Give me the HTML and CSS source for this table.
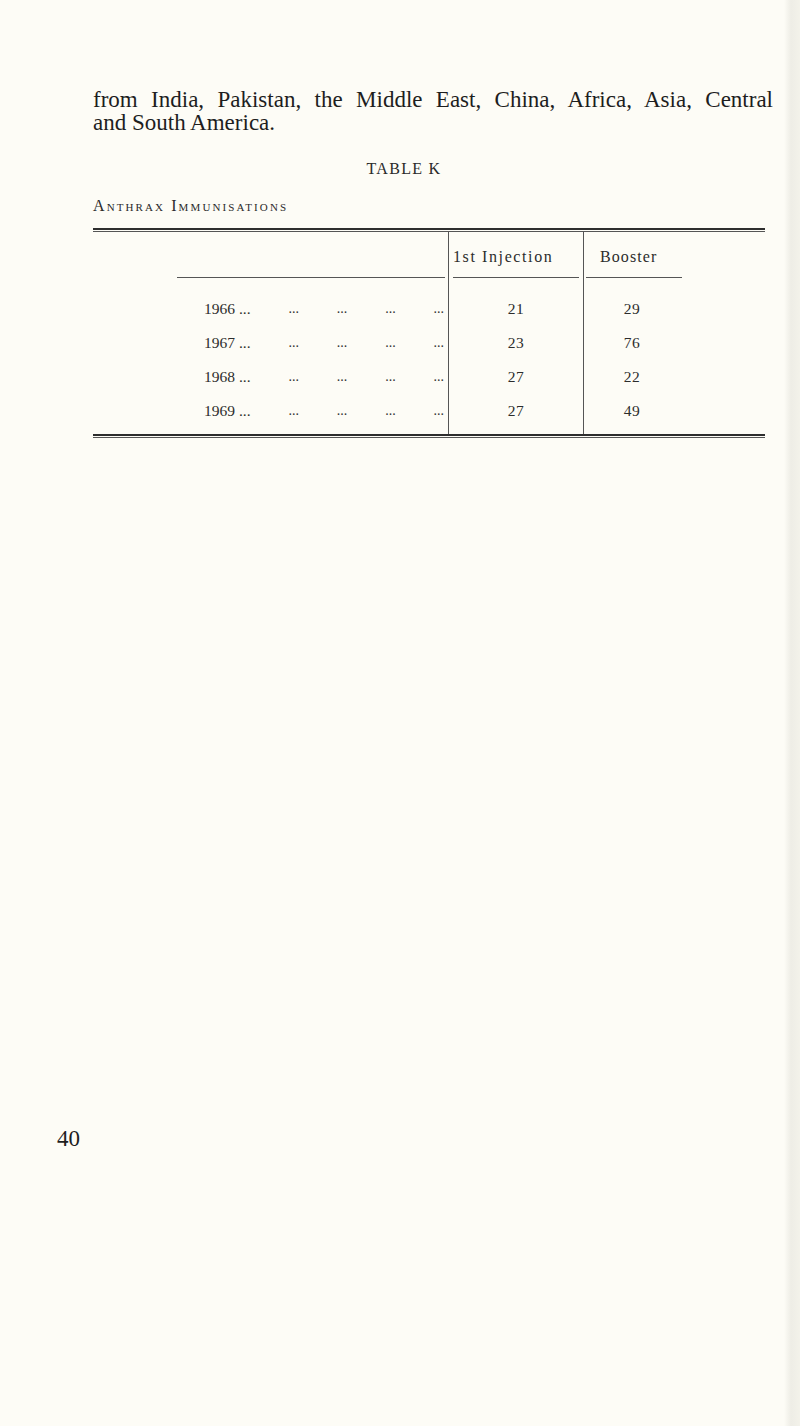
FILE: index.html
```html
<!DOCTYPE html>
<html lang="en">
<head>
<meta charset="utf-8">
<title>Table K</title>
<link rel="stylesheet" href="styles.css">
</head>
<body>
<div class="page">
  <p class="para"><span class="line-full">from India, Pakistan, the Middle East, China, Africa, Asia, Central</span> <span class="line">and South America.</span></p>
  <div class="table-title">TABLE K</div>
  <div class="caption">Anthrax Immunisations</div>
  <div class="tbl">
    <div class="rule-double"></div>
    <div class="grid">
      <div class="c1 head"><div class="hrule"></div></div>
      <div class="c2 head"><div class="hrule hrule-2">1st Injection</div></div>
      <div class="c3 head"><div class="hrule hrule-3">Booster</div></div>

      <div class="c1"></div><div class="c2"></div><div class="c3"></div>

      <div class="c1 year"><span>1966 ...</span><span>...</span><span>...</span><span>...</span><span>...</span></div>
      <div class="c2 num">21</div>
      <div class="c3 num"><span class="val">29</span></div>

      <div class="c1 year"><span>1967 ...</span><span>...</span><span>...</span><span>...</span><span>...</span></div>
      <div class="c2 num">23</div>
      <div class="c3 num"><span class="val">76</span></div>

      <div class="c1 year"><span>1968 ...</span><span>...</span><span>...</span><span>...</span><span>...</span></div>
      <div class="c2 num">27</div>
      <div class="c3 num"><span class="val">22</span></div>

      <div class="c1 year"><span>1969 ...</span><span>...</span><span>...</span><span>...</span><span>...</span></div>
      <div class="c2 num">27</div>
      <div class="c3 num"><span class="val">49</span></div>

      <div class="c1"></div><div class="c2"></div><div class="c3"></div>
    </div>
    <div class="rule-double rule-bottom"></div>
  </div>
  <div class="folio">40</div>
</div>
</body>
</html>
```

FILE: styles.css
```css
html, body {
  margin: 0;
  padding: 0;
}
body {
  width: 800px;
  min-height: 1426px;
  background: linear-gradient(to right, #fdfcf6 0, #fdfcf6 784px, #eeede6 791px, #f3f2ea 800px);
  color: #1e1e1e;
  font-family: "Liberation Serif", "Times New Roman", serif;
}
.page {
  padding-top: 88px;
}
.para {
  margin: 0 0 0 93px;
  width: 680px;
  font-size: 23px;
  line-height: 23px;
}
.line-full {
  display: block;
  text-align: justify;
  text-align-last: justify;
}
.line {
  display: block;
}
.table-title {
  margin-top: 26px;
  padding-left: 8px;
  text-align: center;
  font-size: 16px;
  letter-spacing: 1.3px;
  line-height: 18px;
  color: #2a2a2a;
}
.caption {
  margin: 19px 0 0 93px;
  font-size: 16px;
  font-variant: small-caps;
  letter-spacing: 2.1px;
  line-height: 18px;
  color: #2a2a2a;
}
.tbl {
  margin: 13px 0 0 93px;
  width: 672px;
  color: #2c2c2c;
  font-size: 15px;
}
.rule-double {
  height: 1px;
  border-top: 2px solid #2e2e2e;
  border-bottom: 1px solid #555;
}
.grid {
  display: grid;
  grid-template-columns: 355px 135px 182px;
  grid-template-rows: 46px 14px repeat(4, 34px) 6px;
}
.c2, .c3 {
  border-left: 1px solid #555;
}
.head {
  display: flex;
  align-items: flex-end;
}
.c1.head {
  padding: 0 3px 0 84px;
}
.hrule {
  flex: 1;
  border-bottom: 1px solid #555;
  height: 30px;
  box-sizing: border-box;
  line-height: 18px;
  font-size: 16px;
  letter-spacing: 1.1px;
}
.hrule-2 {
  margin: 0 4px 0 4px;
  letter-spacing: 1.6px;
}
.hrule-3 {
  flex: none;
  width: 96px;
  margin-left: 2px;
  padding-left: 14px;
}
.year {
  display: flex;
  justify-content: space-between;
  align-items: center;
  padding: 0 4px 0 111px;
  font-size: 15.5px;
}
.year span + span {
  font-size: 14px;
  color: #333;
}
.num {
  display: flex;
  align-items: center;
  justify-content: center;
  font-size: 15.5px;
  letter-spacing: 0.5px;
}
.c3.num {
  justify-content: flex-start;
}
.val {
  display: block;
  width: 92px;
  margin-left: 2px;
  text-align: center;
}
.folio {
  margin: 689px 0 0 57px;
  font-size: 23px;
  line-height: 24px;
}
```
